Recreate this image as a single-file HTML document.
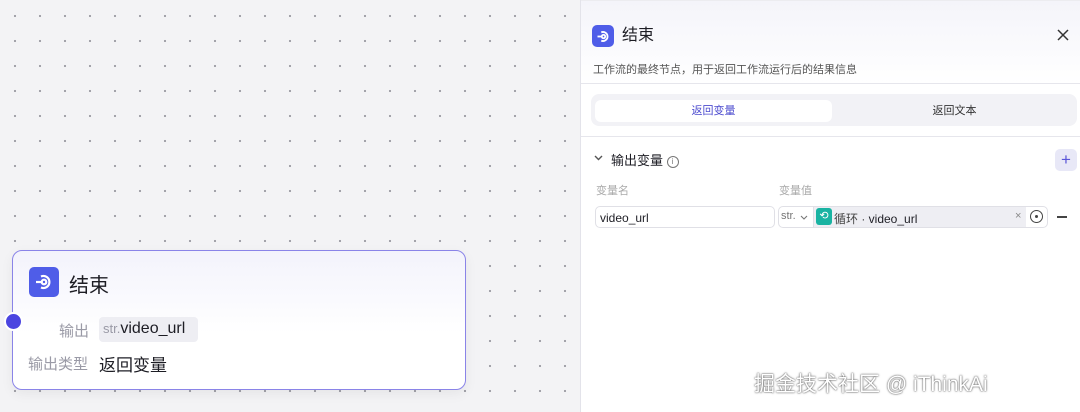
<!DOCTYPE html>
<html><head><meta charset="utf-8"><style>
*{margin:0;padding:0;box-sizing:border-box}
body{width:1080px;height:412px;overflow:hidden;position:relative;font-family:"Liberation Sans","Noto Sans CJK SC",sans-serif;background:#f3f3f5;
background-image:radial-gradient(circle,#9a9aa2 0.9px,transparent 1.3px);background-size:25px 25px;background-position:2.5px 3.5px}
.abs{position:absolute}
.icon{background:#4f5de8;border-radius:5px;display:flex;align-items:center;justify-content:center}
.card{left:12px;top:250px;width:454px;height:140px;border:1px solid #8a84e8;border-radius:10px;background:linear-gradient(#f3f3fc,#fff 60%);box-shadow:0 4px 12px rgba(0,0,0,.06)}
.panel{left:580px;top:0;width:500px;height:412px;background:#fff;border-left:1px solid #e3e3ea}
.t{color:#1d1d24}
</style></head><body>
<div class="abs card">
 <div class="abs icon" style="left:16px;top:16px;width:30px;height:30px"><svg width="20" height="20" viewBox="0 0 20 20" fill="none" stroke="#fff" stroke-width="2.2"><path d="M7 4.5A6 6 0 1 1 7 15.5"/><circle cx="10" cy="10" r="2.3"/><path d="M2 10h5.5"/></svg></div>
 <div class="abs t" style="left:56px;top:18px;font-size:20px">结束</div>
 <div class="abs" style="left:46px;top:69px;font-size:15px;color:#9a9aa6">输出</div>
 <div class="abs" style="left:86px;top:66px;height:25px;width:99px;background:#eeeef3;border-radius:4px;font-size:16px;padding:3px 4px;white-space:nowrap"><span style="color:#9a9aa6;font-size:13px">str.</span><span class="t">video_url</span></div>
 <div class="abs" style="left:15px;top:102px;font-size:15px;color:#9a9aa6">输出类型</div>
 <div class="abs t" style="left:86px;top:100px;font-size:17px">返回变量</div>
</div>
<div class="abs" style="left:4px;top:312px;width:19px;height:19px;border-radius:50%;background:#4b45e0;border:2px solid #fff"></div>
<div class="abs panel">
 <div class="abs" style="left:0;top:0;width:500px;height:84px;background:linear-gradient(#f4f4fa,#fff);border-bottom:1px solid #e6e6ec;border-top:1px solid #ececf0"></div>
 <div class="abs icon" style="left:11px;top:25px;width:22px;height:22px"><svg width="15" height="15" viewBox="0 0 20 20" fill="none" stroke="#fff" stroke-width="2.4"><path d="M7 4.5A6 6 0 1 1 7 15.5"/><circle cx="10" cy="10" r="2.3"/><path d="M2 10h5.5"/></svg></div>
 <div class="abs t" style="left:41px;top:26px;font-size:16px;line-height:20px">结束</div>
 <svg class="abs" style="left:476px;top:29px" width="12" height="12" viewBox="0 0 12 12" stroke="#333" stroke-width="1.5"><path d="M1 1L11 11M11 1L1 11"/></svg>
 <div class="abs" style="left:12px;top:61px;font-size:11px;color:#555">工作流的最终节点，用于返回工作流运行后的结果信息</div>
 <div class="abs" style="left:10px;top:94px;width:486px;height:32px;background:#f2f2f6;border-radius:8px"></div>
 <div class="abs" style="left:14px;top:100px;width:237px;height:22px;background:#fff;border-radius:6px;font-size:11px;color:#4d4ccf;text-align:center;line-height:22px">返回变量</div>
 <div class="abs" style="left:251px;top:100px;width:245px;height:22px;font-size:11px;color:#333;text-align:center;line-height:22px">返回文本</div>
 <div class="abs" style="left:0;top:136px;width:500px;border-top:1px solid #e6e6ec"></div>
 <svg class="abs" style="left:13px;top:155px" width="9" height="6" viewBox="0 0 9 6" fill="none" stroke="#555" stroke-width="1.4"><path d="M1 1l3.5 3.5L8 1"/></svg>
 <div class="abs t" style="left:30px;top:150px;font-size:13px">输出变量 <span style="display:inline-block;width:12px;height:12px;border:1px solid #777;border-radius:50%;font-size:8px;text-align:center;line-height:10px;color:#777;vertical-align:1px">i</span></div>
 <div class="abs" style="left:474px;top:149px;width:22px;height:22px;background:#e8e8f7;border-radius:5px;color:#5a55d8;font-size:17px;text-align:center;line-height:21px">+</div>
 <div class="abs" style="left:15px;top:182px;font-size:11px;color:#aaa">变量名</div>
 <div class="abs" style="left:198px;top:182px;font-size:11px;color:#aaa">变量值</div>
 <div class="abs t" style="left:14px;top:206px;width:180px;height:22px;border:1px solid #e0e0e6;border-radius:5px;font-size:12px;padding:4px 4px">video_url</div>
 <div class="abs" style="left:197px;top:206px;width:270px;height:22px;border:1px solid #e0e0e6;border-radius:5px"></div>
 <div class="abs" style="left:200px;top:210px;font-size:11px;color:#777">str.</div>
 <svg class="abs" style="left:219px;top:215px" width="8" height="5" viewBox="0 0 8 5" fill="none" stroke="#777" stroke-width="1.1"><path d="M1 1l3 3 3-3"/></svg>
 <div class="abs" style="left:232px;top:207px;width:1px;height:20px;background:#e0e0e6"></div>
 <div class="abs" style="left:233px;top:207px;width:212px;height:20px;background:#eeeef3"></div>
 <div class="abs" style="left:235px;top:208px;width:16px;height:17px;background:#19b3a2;border-radius:3px;color:#fff;font-size:11px;text-align:center;line-height:17px">⟲</div>
 <div class="abs t" style="left:253px;top:210px;font-size:12px"><span style="color:#444">循环 · </span>video_url</div>
 <div class="abs" style="left:434px;top:210px;font-size:11px;color:#888">×</div>
 <div class="abs" style="left:449px;top:210px;width:13px;height:13px;border:1.3px solid #444;border-radius:50%"><div style="width:3px;height:3px;background:#444;border-radius:50%;margin:3.7px"></div></div>
 <div class="abs" style="left:476px;top:216px;width:10px;height:1.5px;background:#444"></div>
 <div class="abs" style="left:173px;top:368px;font-size:21px;color:#fff;text-shadow:0 0 2px rgba(0,0,0,.6),0 0 1px rgba(0,0,0,.6)">掘金技术社区 @ iThinkAi</div>
</div>
</body></html>
